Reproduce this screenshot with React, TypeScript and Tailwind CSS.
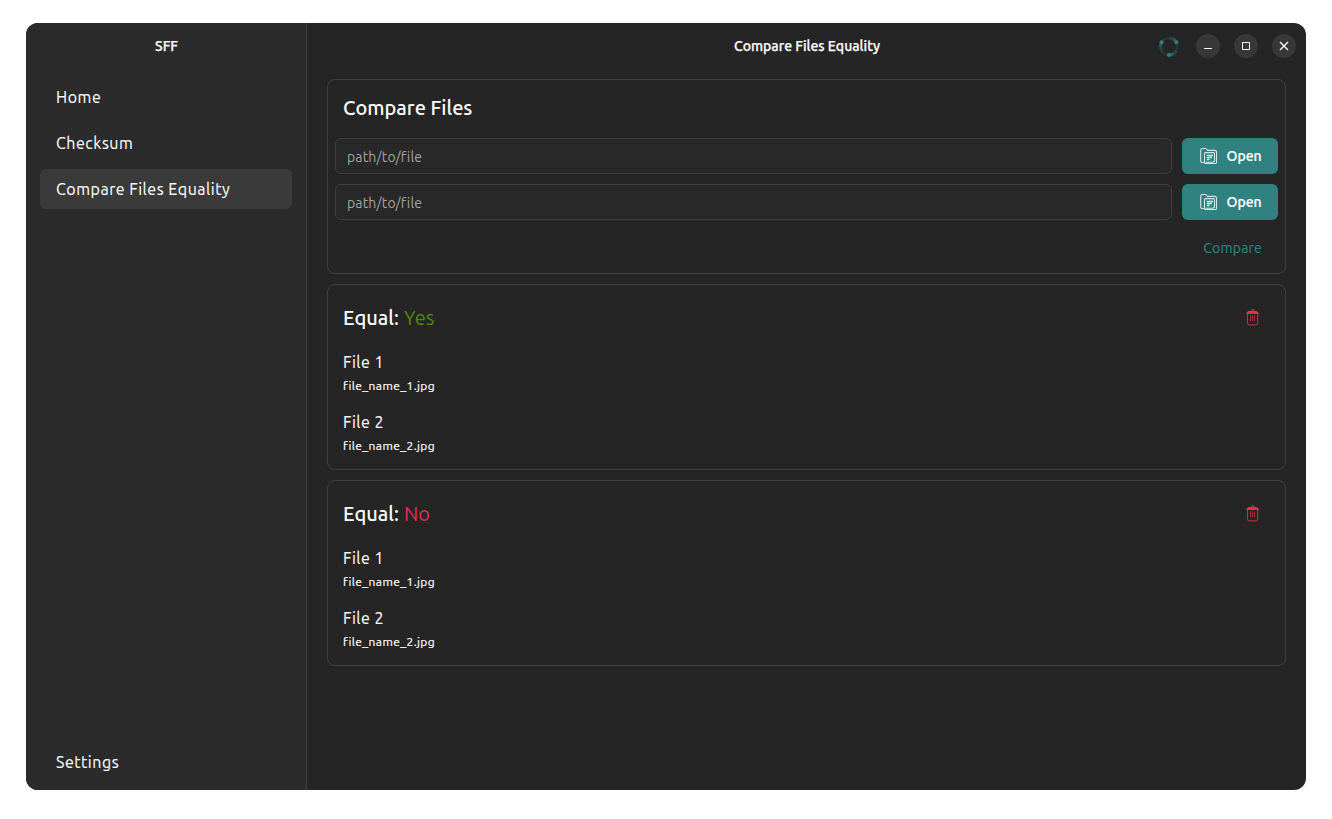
import React from "react";

function FolderIcon() {
  return (
    <svg width="18" height="18" viewBox="0 0 18 18" fill="none" stroke="#d3e6e5" strokeWidth="1.1" strokeLinejoin="round" strokeLinecap="round">
      <path d="M4 15.500H2.200C1.200 15.500.7 15 .7 14V3.200C.7 2 1.300 1.500 2.300 1.500H5.800L7.500 3.400H14.800C15.900 3.400 16.500 4 16.500 5V15.500Q16.500 16.500 15.500 16.500H5.500Q4.500 16.500 4.500 15.500" />
      <path d="M4.500 15.500V6.600Q4.500 5.600 5.500 5.600H13.500Q14.500 5.600 14.500 6.600V14L13 15.200H6" />
      <path d="M6.800 8.500H13M6.800 10.500H12M6.800 12.500H9.500" strokeLinecap="butt" strokeWidth="1.300" />
    </svg>
  );
}

function TrashIcon() {
  return (
    <svg className="-translate-y-px" width="14" height="18" viewBox="0 0 14 18" fill="none">
      <path d="M4.500 2.800Q4.800 1 6 1H7.500Q8.800 1 9.100 2.800Z" fill="#a02c43" />
      <path d="M.4 6V4.800L2.400 2.900H10.500L12.800 4.800V6Z" fill="#e0314f" />
      <path d="M1.500 6V15.200Q1.500 16.900 3 16.900H10.200Q11.700 16.900 11.700 15.200V6" stroke="#c92f4a" />
      <path d="M4.500 7.500V13M6.500 7.500V13M8.500 7.500V13" stroke="#b02c45" strokeWidth="1" />
    </svg>
  );
}

function Spinner() {
  const arc = (
    <>
      <path d="M10 18.500A8.500 8.500 0 0 0 17.400 14.200" stroke="#254544" strokeWidth="3" />
      <path d="M10 18.500A8.500 8.500 0 0 0 14.500 17.200" stroke="#285856" strokeWidth="3.200" />
      <circle cx="10" cy="18.500" r="2" fill="#2f8280" />
    </>
  );
  return (
    <svg className="translate-y-[0.5px] overflow-visible" width="20" height="20" viewBox="0 0 20 20" fill="none">
      <circle cx="10" cy="10" r="8.500" stroke="#253838" strokeWidth="2.500" />
      {arc}
      <g transform="rotate(120 10 10)">{arc}</g>
      <g transform="rotate(240 10 10)">{arc}</g>
    </svg>
  );
}

function WindowButton({ children }: { children: React.ReactNode }) {
  return (
    <button className="flex size-6 items-center justify-center rounded-full bg-[#383838]">
      <svg width="16" height="16" viewBox="0 0 16 16" fill="none" stroke="#fff">{children}</svg>
    </button>
  );
}

function NavItem({ label, active }: { label: string; active?: boolean }) {
  return (
    <button className={`flex h-10 w-full items-center rounded-md px-4 text-[16px] tracking-[0.52px] whitespace-nowrap [-webkit-text-stroke:0.1px] ${active ? "bg-[#3a3a3a]" : ""}`}>
      {label}
    </button>
  );
}

function FileRow() {
  return (
    <div className="flex h-9 gap-2.5">
      <input
        aria-label="File path"
        placeholder="path/to/file"
        className="h-9 min-w-0 flex-1 rounded-md border border-[#3f3f3f] bg-[#282828] px-[11px] pt-0.5 text-[14px] tracking-[0.15px] outline-none placeholder:text-[#a4a4a4]"
      />
      <button className="flex h-9 w-[96px] items-center rounded-md bg-[#308280] pl-[18px] text-[14px] font-medium [-webkit-text-stroke:0.2px]">
        <FolderIcon />
        <span className="ml-[8.5px]">Open</span>
      </button>
    </div>
  );
}

function FileInfo({ label, name }: { label: string; name: string }) {
  return (
    <div className="h-[60px]">
      <div className="h-6 text-[16px] leading-6 tracking-[0.52px] [-webkit-text-stroke:0.1px]">{label}</div>
      <div className="h-6 text-[12px] leading-6 tracking-[0.4px] [-webkit-text-stroke:0.2px]">{name}</div>
    </div>
  );
}

function ResultCard({ equal }: { equal: boolean }) {
  return (
    <section className="h-[186px] rounded-lg border border-[#3f3f3f] px-[15px] pt-[18px]">
      <div className="flex h-[30px] items-center justify-between pr-[10px]">
        <h2 className="flex gap-[5px] text-[20px] leading-[30px]">
          <span className="font-medium">Equal:</span>
          {equal ? <span className="text-[#4e8a08]">Yes</span> : <span className="text-[#dc314e]">No</span>}
        </h2>
        <button aria-label="Delete result"><TrashIcon /></button>
      </div>
      <div className="pt-[17px]">
        <FileInfo label="File 1" name="file_name_1.jpg" />
        <FileInfo label="File 2" name="file_name_2.jpg" />
      </div>
    </section>
  );
}

export default function App() {
  return (
    <div className="h-[819px] w-[1332px] bg-white px-[26px] pt-[23px] font-['Ubuntu','Noto_Sans',sans-serif] text-white">
      <div className="flex h-[767px] w-[1280px] overflow-hidden rounded-xl bg-[#252525]">
        <aside className="flex w-[281px] flex-col border-r border-[#404040] bg-[#2b2b2b] px-[14px] pb-2">
          <div className="flex h-[46px] items-center justify-center pl-px text-[14px] font-medium [-webkit-text-stroke:0.25px]">SFF</div>
          <nav className="flex flex-1 flex-col gap-1.5 pt-2">
            <NavItem label="Home" />
            <NavItem label="Checksum" />
            <NavItem label="Compare Files Equality" active />
          </nav>
          <NavItem label="Settings" />
        </aside>
        <main className="flex min-w-0 flex-1 flex-col">
          <header className="grid h-[46px] grid-cols-[1fr_auto_1fr] items-center pr-[10px]">
            <div />
            <h1 className="ml-[11px] text-[14px] font-medium whitespace-nowrap [-webkit-text-stroke:0.25px]">Compare Files Equality</h1>
            <div className="flex items-center justify-end gap-3.5">
              <div className="mr-[3px]"><Spinner /></div>
              <WindowButton><path d="M4 10.500H12" /></WindowButton>
              <WindowButton><path d="M4.500 4.500H11.500V11.500H4.500Z" /></WindowButton>
              <WindowButton><path d="M4 4L12 12M12 4L4 12" strokeWidth="1.300" /></WindowButton>
            </div>
          </header>
          <div className="flex flex-col gap-2.5 pt-[10px] pr-5 pl-5">
            <section className="h-[195px] rounded-lg border border-[#3f3f3f] px-[7px] pt-[13px]">
              <h2 className="ml-2 h-[45px] text-[20px] leading-[30px] font-medium">Compare Files</h2>
              <div className="flex flex-col gap-2.5">
                <FileRow />
                <FileRow />
              </div>
              <div className="flex h-[56px] items-center justify-end pr-4">
                <button className="text-[14px] tracking-[0.2px] text-[#308280] [-webkit-text-stroke:0.15px]">Compare</button>
              </div>
            </section>
            <ResultCard equal />
            <ResultCard equal={false} />
          </div>
        </main>
      </div>
    </div>
  );
}
